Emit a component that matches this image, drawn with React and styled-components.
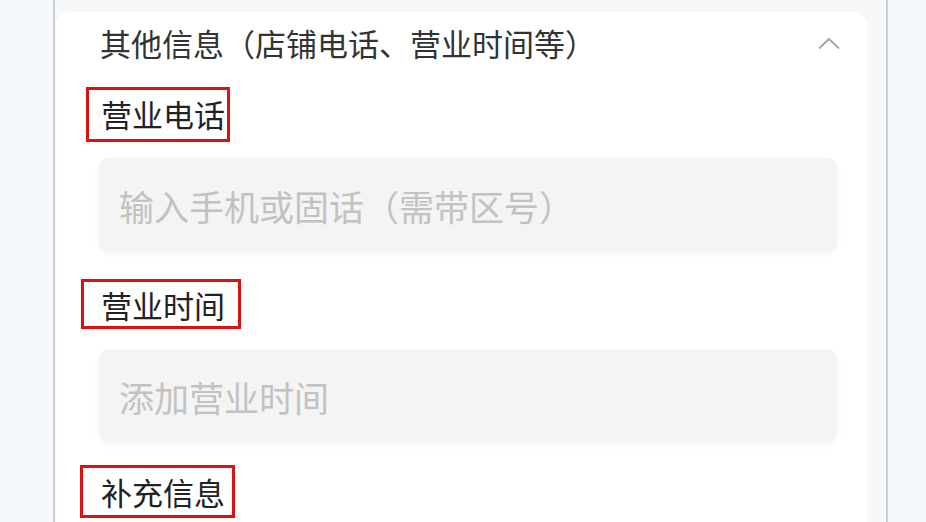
import styled, { createGlobalStyle } from "styled-components";

const GlobalStyle = createGlobalStyle`
  body {
    margin: 0;
    background: #f5f9fc;
    font-family: "Noto Sans CJK SC", "Noto Sans", sans-serif;
  }
`;

const fields = [
  {
    label: "营业电话",
    placeholder: "输入手机或固话（需带区号）",
    boxTop: 25,
    pad: "6px 2px 7px 12px",
    shift: 6,
    inputTop: 16,
  },
  {
    label: "营业时间",
    placeholder: "添加营业时间",
    boxTop: 27,
    pad: "5px 13px 3px 17px",
    shift: 1,
    inputTop: 20,
  },
];

function App() {
  return (
    <>
      <GlobalStyle />
      <Frame>
        <Card>
          <Header>
            <Title>其他信息（店铺电话、营业时间等）</Title>
            <Chevron width="22" height="14" viewBox="0 0 22 14">
              <polyline points="1.5,12 11,3 20.5,12" />
            </Chevron>
          </Header>
          {fields.map((f) => (
            <Field key={f.label}>
              <Label $top={f.boxTop} $pad={f.pad} $shift={f.shift}>
                {f.label}
              </Label>
              <Input $top={f.inputTop}>{f.placeholder}</Input>
            </Field>
          ))}
          <Label $top={22} $pad="6px 7px 5px 18px" $shift={0}>
            补充信息
          </Label>
        </Card>
      </Frame>
    </>
  );
}

export default App;

const Frame = styled.div`
  width: 835px;
  height: 522px;
  margin-left: 53px;
  box-sizing: border-box;
  border-left: 2px solid #c9cdd3;
  border-right: 2px solid #c9cdd3;
  background: #f7f8fa;
  padding: 12px 19px 0 1px;
  overflow: hidden;
`;

const Card = styled.div`
  background: #ffffff;
  border-radius: 14px 14px 0 0;
  height: 100%;
  display: flex;
  flex-direction: column;
  align-items: flex-start;
  padding-left: 26px;
  box-sizing: border-box;
`;

const Header = styled.div`
  align-self: stretch;
  display: flex;
  align-items: center;
  justify-content: space-between;
  padding: 12px 27px 0 18px;
  height: 38px;
  box-sizing: content-box;
`;

const Title = styled.div`
  font-size: 31px;
  line-height: 38px;
  color: #333333;
  white-space: nowrap;
`;

const Chevron = styled.svg`
  fill: none;
  stroke: #a3a3a3;
  stroke-width: 1.8;
  stroke-linecap: round;
  stroke-linejoin: round;
`;

const Field = styled.div`
  align-self: stretch;
  display: flex;
  flex-direction: column;
  align-items: flex-start;
`;

const Label = styled.div`
  margin-top: ${(p) => p.$top}px;
  margin-left: ${(p) => p.$shift - 2}px;
  padding: ${(p) => p.$pad};
  border: 3px solid #de1010;
  font-size: 31px;
  line-height: 36px;
  color: #222222;
  white-space: nowrap;
`;

const Input = styled.div`
  align-self: stretch;
  margin: ${(p) => p.$top}px 30px 0 17px;
  height: 94px;
  display: flex;
  align-items: center;
  padding-left: 20px;
  background: #f4f4f4;
  border-radius: 10px;
  box-shadow: 0 3px 8px rgba(0, 0, 0, 0.03);
  font-size: 35px;
  color: #c2c2c2;
  white-space: nowrap;
`;
